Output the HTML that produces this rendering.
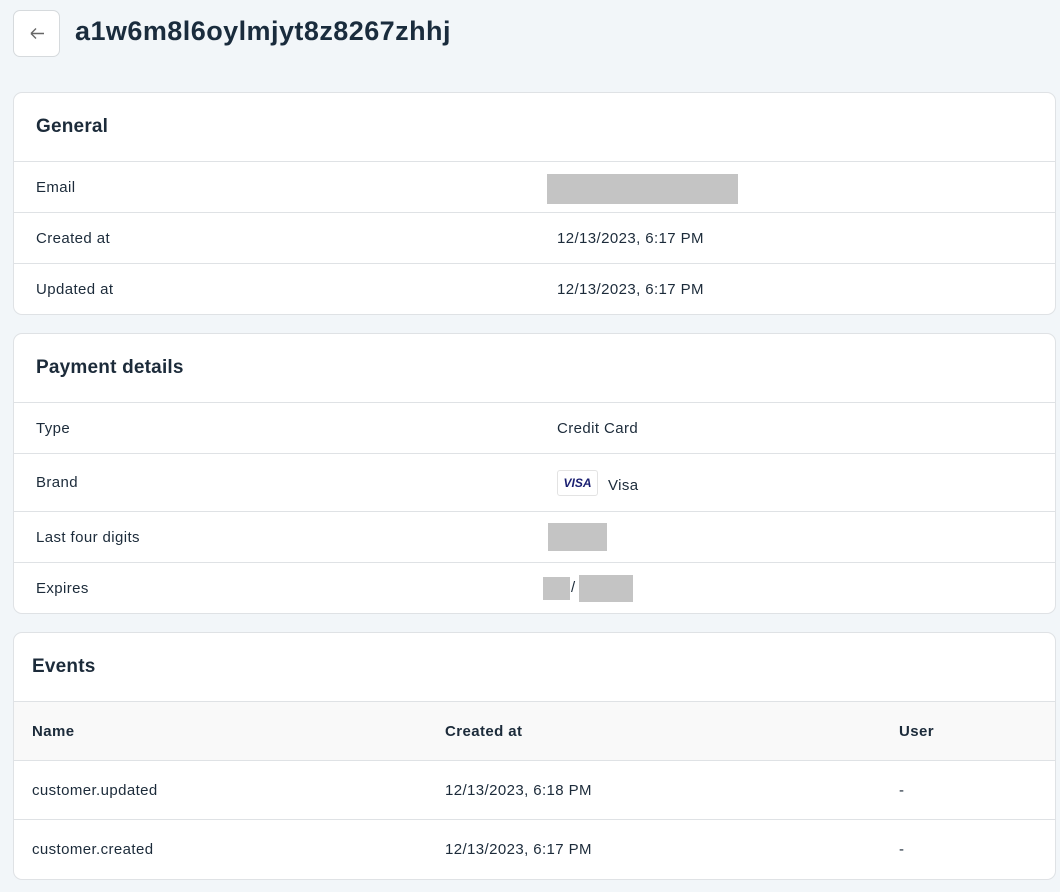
<!DOCTYPE html>
<html><head><meta charset="utf-8"><style>
*{box-sizing:border-box;margin:0;padding:0}
body{width:1060px;height:892px;background:#f2f6f9;font-family:"Liberation Sans",sans-serif;color:#1c2b3a;position:relative;overflow:hidden}
.abs{position:absolute}
.back{left:13px;top:10px;width:47px;height:47px;border:1px solid #d6dadd;border-radius:7px;background:#fff}
.title{left:75px;top:16px;font-size:27px;font-weight:bold;color:#1a2c3d;letter-spacing:.45px}
.card{position:absolute;left:13px;width:1043px;background:#fff;border:1px solid #dfe2e5;border-radius:9px;overflow:hidden}
.hd{height:69px;border-bottom:1px solid #dfe2e5;font-size:19px;font-weight:bold;padding-left:22px;display:flex;align-items:center;letter-spacing:.2px}
.row{border-bottom:1px solid #dfe2e5;font-size:15px;position:relative;display:flex;align-items:center;padding-left:22px;letter-spacing:.4px}
.row:last-child{border-bottom:none}
.v{position:absolute;left:543px}
.red{position:absolute;background:#c4c4c4}
.th{background:#f9f9f9;font-weight:bold}
.c{position:absolute}
</style></head><body>
<div class="abs back"><svg width="47" height="47" viewBox="0 0 47 47"><path d="M17 22.5h13M17 22.5l5-5M17 22.5l5 5" stroke="#666" stroke-width="1.4" fill="none"/></svg></div>
<div class="abs title">a1w6m8l6oylmjyt8z8267zhhj</div>

<div class="card" style="top:92px;height:223px">
<div class="hd">General</div>
<div class="row" style="height:51px">Email<div class="red" style="left:533px;top:12px;width:191px;height:30px"></div></div>
<div class="row" style="height:51px">Created at<span class="v">12/13/2023, 6:17 PM</span></div>
<div class="row" style="height:50px">Updated at<span class="v">12/13/2023, 6:17 PM</span></div>
</div>

<div class="card" style="top:333px;height:281px">
<div class="hd">Payment details</div>
<div class="row" style="height:51px">Type<span class="v">Credit Card</span></div>
<div class="row" style="height:58px">Brand<span class="v" style="display:flex;align-items:center;top:16px"><span style="display:inline-block;width:41px;height:26px;border:1px solid #e3e3e3;border-radius:3px;color:#1a1f71;font-weight:bold;font-style:italic;font-size:12px;text-align:center;line-height:24px;letter-spacing:0">VISA</span><span style="margin-left:10px;margin-top:4px">Visa</span></span></div>
<div class="row" style="height:51px">Last four digits<div class="red" style="left:534px;top:11px;width:59px;height:28px"></div></div>
<div class="row" style="height:50px">Expires<div class="red" style="left:529px;top:14px;width:27px;height:23px"></div><span class="c" style="left:557px;top:16px">/</span><div class="red" style="left:565px;top:12px;width:54px;height:27px"></div></div>
</div>

<div class="card" style="top:632px;height:248px">
<div class="hd" style="padding-left:18px">Events</div>
<div class="row th" style="height:59px;padding-left:18px">Name<span class="c" style="left:431px">Created at</span><span class="c" style="left:885px">User</span></div>
<div class="row" style="height:59px;padding-left:18px">customer.updated<span class="c" style="left:431px">12/13/2023, 6:18 PM</span><span class="c" style="left:885px">-</span></div>
<div class="row" style="height:59px;padding-left:18px">customer.created<span class="c" style="left:431px">12/13/2023, 6:17 PM</span><span class="c" style="left:885px">-</span></div>
</div>
</body></html>
